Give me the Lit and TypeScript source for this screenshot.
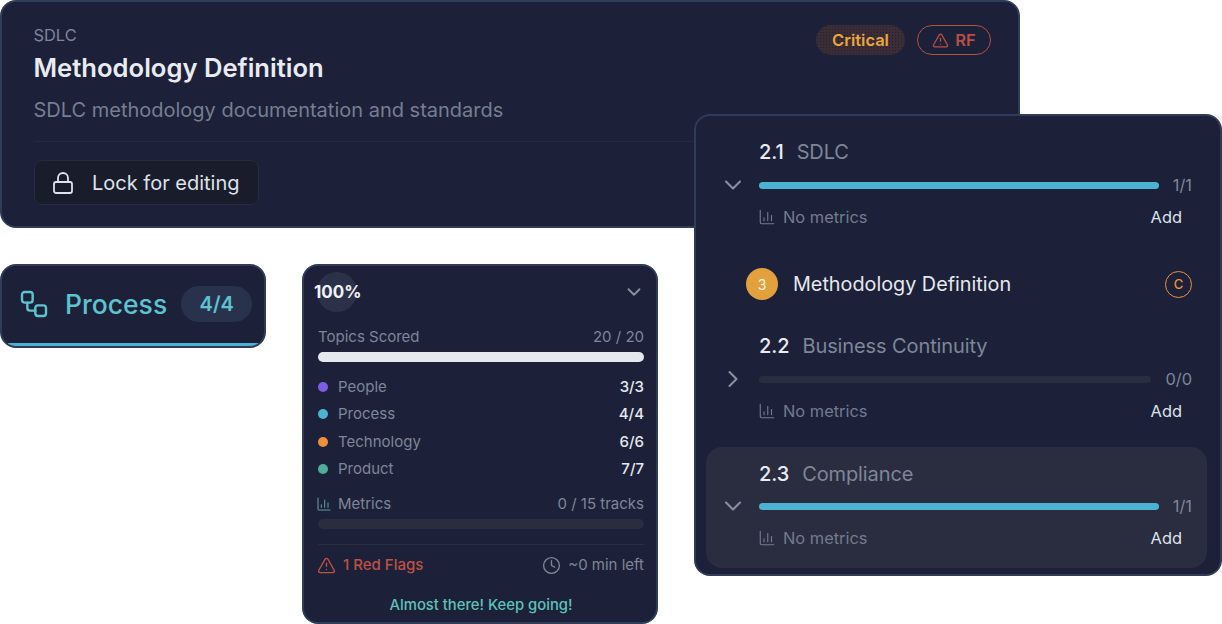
import { LitElement, html, css, svg } from "lit";
import { customElement } from "lit/decorators.js";

const icon = (body: unknown, size: number, cls = "") => html`<svg class="ic ${cls}" width=${size} height=${size} viewBox="0 0 24 24" fill="none" stroke="currentColor" stroke-linecap="round" stroke-linejoin="round">${body}</svg>`;
const chart = svg`<path d="M3 3v16a2 2 0 0 0 2 2h16"/><path d="M8 17v-4"/><path d="M13 17V6"/><path d="M18 17v-7"/>`;
const triangle = svg`<path d="m21.73 18-8-14a2 2 0 0 0-3.48 0l-8 14A2 2 0 0 0 4 21h16a2 2 0 0 0 1.73-3"/><path d="M12 9v4"/><path d="M12 17h.01"/>`;
const down = svg`<path d="m6 9 6 6 6-6"/>`;
const right = svg`<path d="m9 6 6 6-6 6"/>`;
const lock = svg`<rect x="3" y="11" width="18" height="11" rx="2"/><path d="M7 11V7a5 5 0 0 1 10 0v4"/>`;
const flow = svg`<rect x="3" y="3" width="8" height="8" rx="2"/><path d="M7 11v4a2 2 0 0 0 2 2h4"/><rect x="13" y="13" width="8" height="8" rx="2"/>`;
const clock = svg`<circle cx="12" cy="12" r="10"/><path d="M12 6v6l4 2"/>`;

const cats = [
  { n: "People", v: "3/3", c: "#7c5ce8" },
  { n: "Process", v: "4/4", c: "#4bb2d1" },
  { n: "Technology", v: "6/6", c: "#ee8f3c" },
  { n: "Product", v: "7/7", c: "#4fae97" },
];

@customElement("app-root")
export class AppRoot extends LitElement {
  static styles = css`
    :host { display: block; position: relative; width: 1222px; height: 624px; overflow: hidden; background: #fff; font-family: Inter, "Noto Sans", sans-serif; color: #e6e8ee; }
    * { box-sizing: border-box; }
    .ic { display: block; flex: none; }
    .card { position: absolute; background: #1c2139; border: 2px solid #2f3b57; }

    .main { left: 0; top: 0; width: 1020px; height: 228px; border-radius: 16px; padding: 22px 27px 0 31.5px; }
    .main-head { display: flex; justify-content: space-between; align-items: flex-start; }
    .crumb { font-size: 16.4px; line-height: 22px; color: #7e8698; }
    .title { font-size: 25.6px; line-height: 34px; font-weight: 600; color: #e9ebf1; margin-top: 5px; }
    .desc { font-size: 20px; line-height: 28px; color: #767e91; margin-top: 11px; }
    .badges { display: flex; gap: 12px; margin-top: 1px; }
    .badge { height: 30px; border-radius: 15px; display: flex; align-items: center; justify-content: center; font-size: 16.5px; font-weight: 600; }
    .crit { width: 89px; color: #eda63c; background: #3a2d36 radial-gradient(circle, #24222f 0.7px, transparent 0.8px) 0 0 / 3px 3px; }
    .rf { width: 74px; gap: 6px; color: #b84f42; border: 1.5px solid #b84f42; }
    .rf .ic { stroke-width: 1.8; }
    .rule { height: 1px; background: #232a40; margin-top: 17px; }
    .lock { display: inline-flex; align-items: center; gap: 17px; height: 45px; width: 225px; margin-top: 18px; padding-left: 16.5px; background: #191c2b; border: 1px solid #262b40; border-radius: 8px; font-size: 20px; color: #dfe2ea; }
    .lock .ic { stroke-width: 1.8; }

    .tab { left: 0; top: 264px; width: 266px; height: 84px; border-radius: 16px; overflow: hidden; display: flex; align-items: center; padding: 0 0 5px 16px; color: #5cc3cf; }
    .tab .ic { stroke-width: 1.8; }
    .tab-name { font-size: 26.5px; font-weight: 500; margin-left: 15px; line-height: 36px; }
    .tab-count { width: 71px; height: 36px; margin-left: 14px; border-radius: 18px; display: flex; align-items: center; justify-content: center; font-size: 20px; font-weight: 600; background: #28324d; }
    .tab-line { position: absolute; left: 6px; right: 6px; bottom: 0; height: 3px; background: #4bb2d1; }

    .sum { left: 302px; top: 264px; width: 356px; height: 360px; border-radius: 16px; padding: 0 12px 0 14px; }
    .sum-head { height: 52px; display: flex; align-items: center; justify-content: space-between; position: relative; }
    .pct { margin-left: -4px; width: 47px; font-size: 17px; font-weight: 700; color: #f1f2f6; position: relative; }
    .pct::before { content: ""; position: absolute; left: 3px; top: -10px; width: 40px; height: 40px; border-radius: 50%; background: #2b3149; z-index: 0; }
    .pct span { position: relative; }
    .sum-head .ic { color: #8a90a0; margin-right: -1px; stroke-width: 2; }
    .between { display: flex; justify-content: space-between; align-items: center; font-size: 15px; line-height: 20px; color: #7e8698; }
    .scored { margin-top: 9px; }
    .bar { height: 10px; border-radius: 5px; margin-top: 5px; background: #e6e8ee; }
    .cats { margin-top: 15px; display: grid; gap: 7.4px; }
    .cat { display: flex; align-items: center; font-size: 15px; line-height: 20px; color: #7e8698; }
    .dot { width: 10px; height: 10px; border-radius: 50%; margin-right: 10px; flex: none; }
    .cat b { margin-left: auto; font-weight: 500; color: #e6e8ee; }
    .metrics { margin-top: 15px; }
    .metrics .lbl { display: flex; align-items: center; gap: 6px; margin-left: -2px; }
    .metrics .ic { color: #5a9aa0; stroke-width: 1.6; }
    .track { background: #2a2d40; }
    .sum-rule { height: 1px; background: #282d42; margin-top: 15px; }
    .foot { margin-top: 10px; }
    .flag { display: flex; align-items: center; gap: 7px; margin-left: -1px; color: #bc5243; font-weight: 500; }
    .flag .ic { stroke-width: 1.7; }
    .left { display: flex; align-items: center; gap: 7px; }
    .left .ic { stroke-width: 1.7; }
    .cheer { margin-top: 20px; text-align: center; font-size: 14.8px; line-height: 20px; font-weight: 500; color: #5cc3b8; }

    .panel { left: 694px; top: 114px; width: 528px; height: 462px; border-radius: 16px; padding-top: 23px; }
    .sec { display: grid; grid-template-columns: 63px 1fr; grid-template-rows: 26px 20px 24px; row-gap: 10px; padding-right: 28px; }
    .sec.two { margin-top: 29px; }
    .sec.active { margin: 24px 13px 0 10px; padding: 13px 15px 18px 0; grid-template-columns: 53px 1fr; background: #2a2d40; border-radius: 16px; }
    .sec.active .sec-title { padding-top: 2px; }
    .sec-title { grid-column: 2; display: flex; align-items: center; gap: 13px; font-size: 20px; color: #7e8698; letter-spacing: -0.1px; }
    .sec-title b { font-weight: 500; color: #e9ebf1; }
    .chev { grid-column: 1; grid-row: 2; justify-self: end; align-self: center; margin-right: 12px; color: #8a90a0; stroke-width: 1.8; }
    .prog { grid-column: 2; display: flex; align-items: center; gap: 14px; font-size: 16.4px; color: #7e8698; }
    .fill { flex: 1; height: 7px; border-radius: 3.5px; background: #4bb2d1; }
    .fill.empty { background: #2a2d40; }
    .meta { grid-column: 2; display: flex; align-items: center; font-size: 16.4px; color: #737b8e; padding-right: 10px; }
    .meta .ic { margin: 0 7px 0 -1px; stroke-width: 1.5; }
    .meta span { margin-left: auto; color: #dfe2ea; }
    .topic { margin: 35px 28px 0 50px; height: 40px; display: flex; align-items: center; font-size: 19.8px; color: #e6e8ee; }
    .num { width: 32px; height: 32px; border-radius: 50%; background: #e2a13c; color: #fdf6e8; font-size: 14px; display: flex; align-items: center; justify-content: center; margin-right: 15px; }
    .c { margin-left: auto; width: 27px; height: 27px; border-radius: 50%; border: 1.5px solid #ee8f3c; color: #ee8f3c; font-size: 13px; font-weight: 500; display: flex; align-items: center; justify-content: center; }
  `;

  private section(no: string, name: string, cnt: string, open: boolean, full: boolean, cls = "") {
    return html`<section class="sec ${cls}">
      <div class="sec-title"><b>${no}</b>${name}</div>
      ${icon(open ? down : right, 28, "chev")}
      <div class="prog"><div class="fill ${full ? "" : "empty"}"></div>${cnt}</div>
      <div class="meta">${icon(chart, 18)}No metrics<span>Add</span></div>
    </section>`;
  }

  render() {
    return html`
      <div class="card main">
        <div class="main-head">
          <div>
            <div class="crumb">SDLC</div>
            <div class="title">Methodology Definition</div>
          </div>
          <div class="badges">
            <div class="badge crit">Critical</div>
            <div class="badge rf">${icon(triangle, 17)}RF</div>
          </div>
        </div>
        <div class="desc">SDLC methodology documentation and standards</div>
        <div class="rule"></div>
        <div class="lock">${icon(lock, 24)}Lock for editing</div>
      </div>

      <div class="card tab">
        ${icon(flow, 32)}
        <div class="tab-name">Process</div>
        <div class="tab-count">4/4</div>
        <div class="tab-line"></div>
      </div>

      <div class="card sum">
        <div class="sum-head">
          <div class="pct"><span>100%</span></div>
          ${icon(down, 22)}
        </div>
        <div class="between scored"><span>Topics Scored</span><span>20 / 20</span></div>
        <div class="bar"></div>
        <div class="cats">
          ${cats.map((c) => html`<div class="cat"><i class="dot" style="background:${c.c}"></i>${c.n}<b>${c.v}</b></div>`)}
        </div>
        <div class="between metrics"><span class="lbl">${icon(chart, 16)}Metrics</span><span>0 / 15 tracks</span></div>
        <div class="bar track"></div>
        <div class="sum-rule"></div>
        <div class="between foot">
          <span class="flag">${icon(triangle, 19)}1 Red Flags</span>
          <span class="left">${icon(clock, 19)}~0 min left</span>
        </div>
        <div class="cheer">Almost there! Keep going!</div>
      </div>

      <div class="card panel">
        ${this.section("2.1", "SDLC", "1/1", true, true)}
        <div class="topic"><div class="num">3</div>Methodology Definition<div class="c">C</div></div>
        ${this.section("2.2", "Business Continuity", "0/0", false, false, "two")}
        ${this.section("2.3", "Compliance", "1/1", true, true, "active")}
      </div>
    `;
  }
}
